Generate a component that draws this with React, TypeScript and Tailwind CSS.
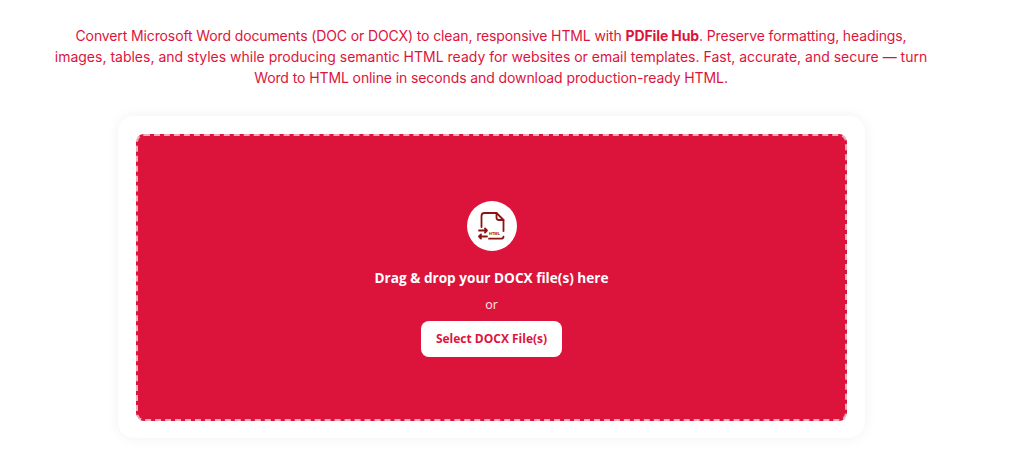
import React from 'react';

const FileHtmlIcon = () => (
  <svg viewBox="0 0 32 32" className="w-8 h-8" fill="none" stroke="#8b1414" strokeWidth="1.8" strokeLinecap="round" strokeLinejoin="round">
    <path d="M5.5 17V6a3 3 0 0 1 3-3h12l7 7v11" />
    <path d="M20.5 3v4.5a2.5 2.5 0 0 0 2.5 2.5h4.5" />
    <path d="M13 28.7h12a2.5 2.5 0 0 0 2.5-2" />
    <path d="M3 20.5h8M9 18.5l2 2-2 2M11 26.5H3M5 24.5l-2 2 2 2" />
    <text x="13" y="25" fontSize="4" fontWeight="700" fill="#8b1414" stroke="none" fontFamily="'Liberation Sans', sans-serif">HTML</text>
  </svg>
);

export default function App() {
  return (
    <div className="min-h-[471px] bg-white pt-[25px]">
      <div className="w-[1024px] pr-[82px] pl-[40px]">
        <p className="text-center text-[14px] leading-[21px] text-[#dc143c] font-['Inter',sans-serif]">
          <span className="tracking-[-0.12px]">Convert Microsoft Word documents (DOC or DOCX) to clean, responsive HTML with <strong className="font-bold">PDFile Hub</strong>. Preserve formatting, headings,</span><br />
          images, tables, and styles while producing semantic HTML ready for websites or email templates. Fast, accurate, and secure — turn<br />
          <span className="tracking-[-0.1px]">Word to HTML online in seconds and download production-ready HTML.</span>
        </p>
      </div>
      <div className="ml-[118px] mt-[28px] w-[747px] rounded-2xl bg-white p-[18px] pb-[17px] shadow-[0_0_14px_rgba(0,0,0,0.06)]">
        <div className="flex h-[287px] flex-col items-center rounded-lg border-2 border-dashed border-[#f3a9b9] bg-[#dc143c] pt-[65px] font-['Open_Sans',sans-serif]">
          <div className="flex h-[50px] w-[50px] items-center justify-center rounded-full bg-white">
            <FileHtmlIcon />
          </div>
          <h3 className="mt-[16px] text-[13.6px] leading-[22px] font-bold text-white">Drag &amp; drop your DOCX file(s) here</h3>
          <span className="mt-[6px] text-[12.5px] leading-[20px] text-[#fde8ec]">or</span>
          <button className="mt-[6px] h-[36px] w-[141px] rounded-lg bg-white text-[12px] font-bold text-[#dc143c]">Select DOCX File(s)</button>
        </div>
      </div>
    </div>
  );
}
